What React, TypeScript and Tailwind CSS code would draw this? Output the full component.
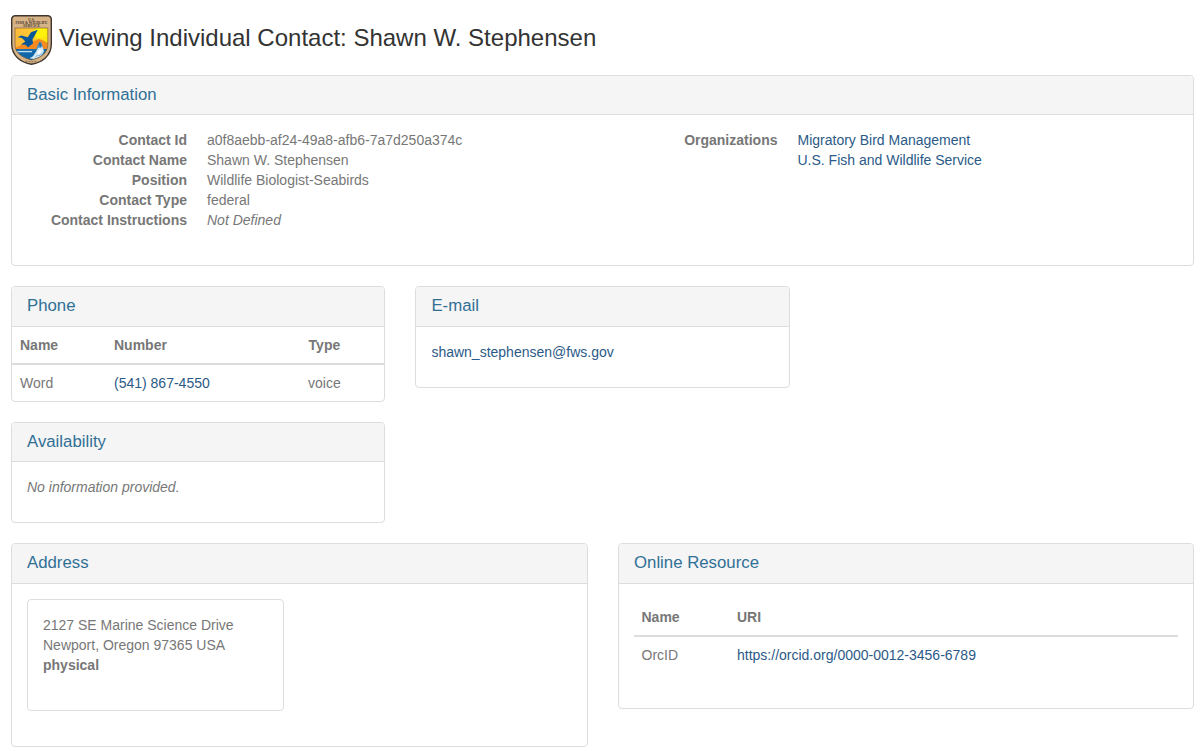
import type { ReactNode } from "react";

function Shield() {
  return (
    <svg className="h-[50px] w-[41px] shrink-0" viewBox="0 0 41 50" role="img" aria-label="U.S. Fish and Wildlife Service">
      <defs>
        <clipPath id="scene">
          <path d="M4 13H36.8V30C36.8 37.5 30 43 20.5 45C11 43 4 37.5 4 30Z" />
        </clipPath>
        <linearGradient id="sky" x1="0" x2="1" y1="0.3" y2="0">
          <stop offset="0" stopColor="#fcb83c" />
          <stop offset="0.5" stopColor="#fdc92f" />
          <stop offset="1" stopColor="#fff200" />
        </linearGradient>
      </defs>
      <path d="M4 0.7H37Q40.3 1.2 40.3 4.5V29C40.3 41 31 47.5 20.5 49.3C10 47.5 0.7 41 0.7 29V4.5Q0.7 1.2 4 0.7Z" fill="#d6b387" stroke="#40352c" strokeWidth="1.4" />
      <text x="20.5" y="6" textAnchor="middle" fontFamily="Liberation Serif, serif" fontWeight="bold" fontSize="3.6" fill="#4b392b">U.S.</text>
      <text x="20.5" y="9" textAnchor="middle" textLength="32" lengthAdjust="spacingAndGlyphs" fontFamily="Liberation Serif, serif" fontWeight="bold" fontSize="3.2" fill="#4b392b">FISH &amp; WILDLIFE</text>
      <text x="20.5" y="11.8" textAnchor="middle" textLength="17" lengthAdjust="spacingAndGlyphs" fontFamily="Liberation Serif, serif" fontWeight="bold" fontSize="3.2" fill="#4b392b">SERVICE</text>
      <g clipPath="url(#scene)">
        <rect x="4" y="13" width="33" height="34" fill="url(#sky)" />
        <ellipse cx="29" cy="18" rx="6" ry="5.5" fill="#fff20a" />
        <path d="M4 33L11 29.5L18 28L23 26L28 24L32 25.5L37 28V36H4Z" fill="#f58a20" />
        <rect x="4" y="34" width="33" height="13" fill="#0f66a8" />
        <path d="M5 36.6H21" stroke="#c4e0f1" strokeWidth="1.3" />
        <path d="M8 35.1H24" stroke="#3c87bd" strokeWidth="0.7" />
        <path d="M24.5 37L26.3 31L28.5 26.8L30.6 27.8L31.4 31L32.8 35L31 38.5L25 41Z" fill="#4c91c1" />
        <path d="M27.5 29L29 27.2L30.4 29.4L29.6 32Z" fill="#2c6c9f" />
        <path d="M25.2 36.5L27.5 32.5L29.4 33L31.2 31.5L33 36L31.6 39L28.6 42L23 44L18.5 43.2L22 41.3L23.4 39Z" fill="#d2e8f4" />
        <path d="M27 36L29.2 34.2L30.4 36.4L28.4 38.8L26 40Z" fill="#f7fcff" />
        <path d="M24.4 42L26.6 40.2L28 41L30.4 38.4" fill="none" stroke="#5a9cc8" strokeWidth="0.7" />
      </g>
      <path d="M6.6 22.2L10.2 20.4L16.8 22.3L20 17.2L26.8 14.8L24.3 19.5L21.5 24.2L22 28.4L19.2 30.4L17.1 32.4L14.7 29.8L10 29.4L14.3 26.6L11 23.1Z" fill="#06579a" />
      <path d="M4 13H36.8V30C36.8 37.5 30 43 20.5 45C11 43 4 37.5 4 30Z" fill="none" stroke="#6b5138" strokeWidth="0.6" />
      <path d="M14.5 46Q20.5 47.6 26.5 46" fill="none" stroke="#6b5138" strokeWidth="0.9" strokeDasharray="1.8 1.2" />
    </svg>
  );
}

function Panel({ title, className, tall = true, children }: { title: string; className: string; tall?: boolean; children: ReactNode }) {
  return (
    <section className={`flex flex-col overflow-hidden rounded-[4px] border border-[#ddd] bg-white ${className}`}>
      <header className={`shrink-0 border-b border-[#ddd] bg-[#f5f5f5] px-[15px] ${tall ? "h-[40px]" : "h-[39px]"}`}>
        <h2 className="pt-[9px] text-[16.8px] leading-[19px] text-[#317095]">{title}</h2>
      </header>
      {children}
    </section>
  );
}

function Link({ children }: { children: ReactNode }) {
  return <a href="#" className="text-[#2b5a88] no-underline">{children}</a>;
}

const details: [string, ReactNode][] = [
  ["Contact Id", "a0f8aebb-af24-49a8-afb6-7a7d250a374c"],
  ["Contact Name", "Shawn W. Stephensen"],
  ["Position", "Wildlife Biologist-Seabirds"],
  ["Contact Type", "federal"],
  ["Contact Instructions", <em>Not Defined</em>],
];

export default function App() {
  return (
    <main className="h-[751px] w-[1200px] overflow-hidden bg-white pl-[11px] font-['Liberation_Sans',Arial,sans-serif] text-[14px] leading-[20px] text-[#777]">
      <div className="flex h-[75px] items-start pt-[15px]">
        <Shield />
        <h1 className="ml-[7px] pt-[9px] text-[24px] leading-[28px] whitespace-nowrap text-[#333]">
          Viewing Individual Contact: Shawn W. Stephensen
        </h1>
      </div>

      <Panel title="Basic Information" className="h-[191px] w-[1183px]" tall={false}>
        <div className="flex pt-[15px]">
          <dl className="grid w-[591px] grid-cols-[175px_1fr] gap-x-5">
            {details.map(([label, value]) => (
              <div key={label} className="contents">
                <dt className="text-right font-bold whitespace-nowrap">{label}</dt>
                <dd>{value}</dd>
              </div>
            ))}
          </dl>
          <dl className="grid flex-1 grid-cols-[174.5px_1fr] gap-x-5">
            <dt className="text-right font-bold">Organizations</dt>
            <dd>
              <Link>Migratory Bird Management</Link>
              <br />
              <Link>U.S. Fish and Wildlife Service</Link>
            </dd>
          </dl>
        </div>
      </Panel>

      <div className="mt-5 flex items-start gap-[30px]">
        <div className="flex flex-col gap-5">
          <Panel title="Phone" className="h-[116px] w-[374px]">
            <table className="w-full table-fixed border-separate border-spacing-0 text-left">
              <colgroup>
                <col className="w-[94px]" />
                <col className="w-[194px]" />
                <col />
              </colgroup>
              <thead>
                <tr>
                  <th className="border-b-2 border-[#ddd] p-2 font-bold">Name</th>
                  <th className="border-b-2 border-[#ddd] p-2 font-bold">Number</th>
                  <th className="border-b-2 border-[#ddd] p-2 pl-[8.6px] font-bold">Type</th>
                </tr>
              </thead>
              <tbody>
                <tr>
                  <td className="p-2">Word</td>
                  <td className="p-2"><Link>(541) 867-4550</Link></td>
                  <td className="p-2">voice</td>
                </tr>
              </tbody>
            </table>
          </Panel>
          <Panel title="Availability" className="h-[101px] w-[374px]" tall={false}>
            <p className="p-[15px]"><em>No information provided.</em></p>
          </Panel>
        </div>
        <Panel title="E-mail" className="ml-[0.4px] h-[102px] w-[374.6px]">
          <p className="p-[15px]"><Link>shawn_stephensen@fws.gov</Link></p>
        </Panel>
      </div>

      <div className="mt-5 flex items-start gap-[30px]">
        <Panel title="Address" className="h-[204px] w-[577px]">
          <div className="p-[15px]">
            <address className="h-[112px] w-[257px] rounded-[4px] border border-[#ddd] p-[15px] not-italic">
              2127 SE Marine Science Drive
              <br />
              Newport, Oregon 97365 USA
              <br />
              <strong className="font-bold">physical</strong>
            </address>
          </div>
        </Panel>
        <Panel title="Online Resource" className="h-[166px] w-[576px]">
          <div className="p-[15px]">
            <table className="w-full table-fixed border-separate border-spacing-0 text-left">
              <colgroup>
                <col className="w-[95px]" />
                <col />
              </colgroup>
              <thead>
                <tr>
                  <th className="border-b-2 border-[#ddd] p-2 pl-[7.5px] font-bold">Name</th>
                  <th className="border-b-2 border-[#ddd] p-2 font-bold">URI</th>
                </tr>
              </thead>
              <tbody>
                <tr>
                  <td className="p-2 pl-[7.5px]">OrcID</td>
                  <td className="p-2"><Link>https://orcid.org/0000-0012-3456-6789</Link></td>
                </tr>
              </tbody>
            </table>
          </div>
        </Panel>
      </div>
    </main>
  );
}
